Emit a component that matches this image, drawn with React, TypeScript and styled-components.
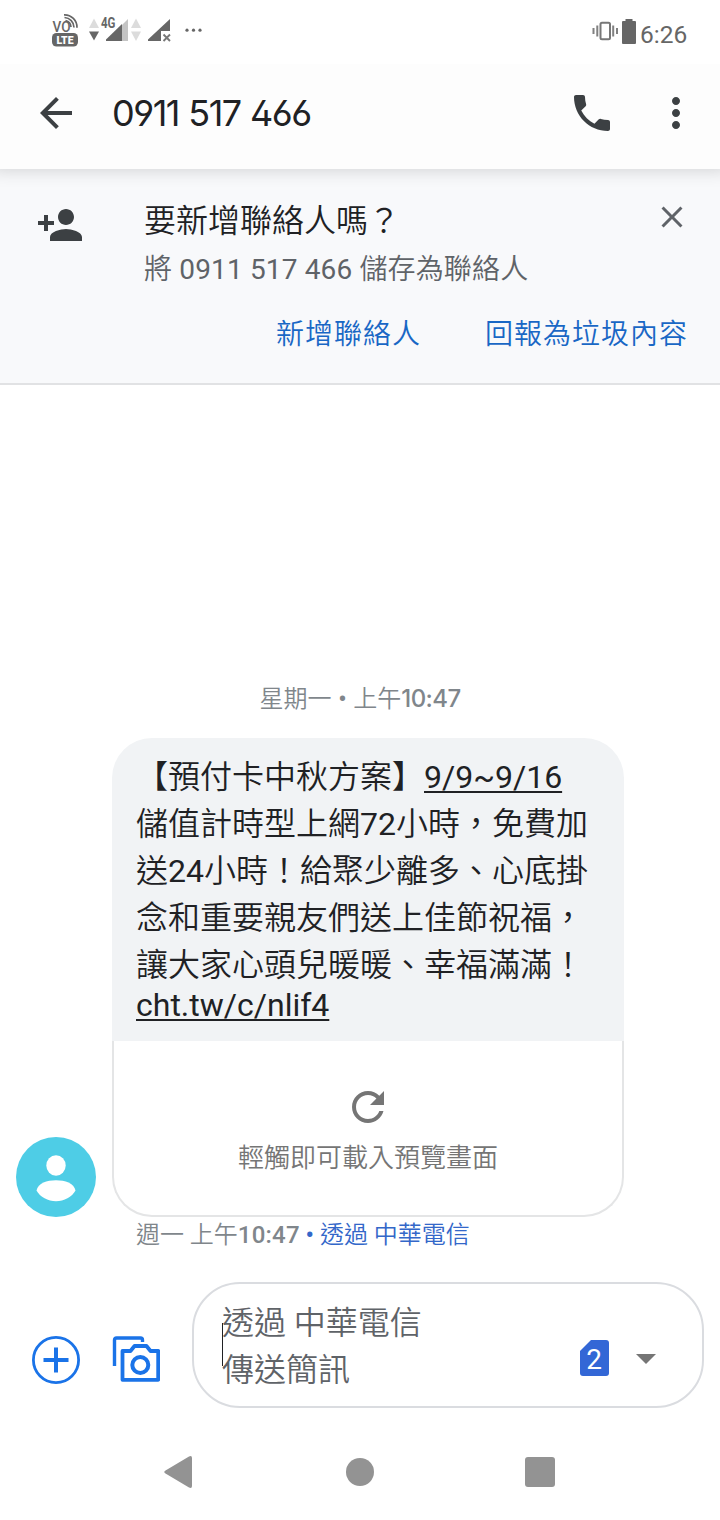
import React from "react";
import styled, { createGlobalStyle } from "styled-components";

const GlobalStyle = createGlobalStyle`
  * { box-sizing: border-box; }
  body {
    margin: 0;
    background: #fff;
    font-family: Roboto, "Noto Sans CJK TC", sans-serif;
    font-weight: 350;
  }
  button {
    padding: 0;
    border: 0;
    background: none;
    font: inherit;
    color: inherit;
  }
  svg { display: block; flex: none; }
`;

const Screen = styled.div`
  width: 720px;
  height: 1520px;
  display: flex;
  flex-direction: column;
  overflow: hidden;
  background: #fff;
`;

const StatusBar = styled.header`
  height: 64px;
  flex: none;
  display: flex;
  justify-content: space-between;
  padding: 0 32px 0 48px;
  color: #666;
`;

const StatusGroup = styled.div`
  display: flex;
`;

const Clock = styled.span`
  padding-top: 19px;
  font-size: 24.5px;
  font-weight: 400;
  line-height: 32px;
  width: 48px;
  white-space: nowrap;
`;

const AppBar = styled.div`
  position: relative;
  z-index: 1;
  height: 105px;
  flex: none;
  display: flex;
  align-items: center;
  padding: 0 20px 7px 32px;
  background: #fdfdfd;
  color: #3c4043;
  box-shadow: 0 -6px 16px 8px rgba(0, 0, 0, 0.15);
  clip-path: inset(0 0 -24px 0);
`;

const IconButton = styled.button<{ $size?: number }>`
  width: ${(p) => p.$size ?? 48}px;
  height: ${(p) => p.$size ?? 48}px;
  flex: none;
`;

const Title = styled.h1`
  margin: 0 auto 0 32px;
  font-family: Inter, Roboto, sans-serif;
  font-feature-settings: "ss01";
  font-size: 36px;
  font-weight: 400;
  line-height: 48px;
  letter-spacing: -1.5px;
  word-spacing: 0.7px;
  color: #202124;
  white-space: nowrap;
`;

const BarActions = styled.div`
  display: flex;
  gap: 36px;
`;

const Banner = styled.section`
  height: 216px;
  flex: none;
  display: grid;
  grid-template-columns: 108px 1fr 36px;
  grid-template-rows: 121px 1fr;
  padding: 30px 30px 0 36px;
  background: #f8f9fb;
  border-bottom: 2px solid #e1e2e4;
  color: #3c4043;
`;

const BannerIcon = styled.div`
  padding-top: 2px;
`;

const BannerClose = styled.div`
  color: #5f6368;
`;

const BannerTitle = styled.div`
  font-size: 32px;
  line-height: 44px;
  color: #202124;
`;

const BannerSub = styled.div`
  margin-top: 7px;
  font-size: 28px;
  line-height: 40px;
  letter-spacing: 0.15px;
  color: #5f6368;
  white-space: nowrap;
`;

const BannerActions = styled.div`
  grid-column: 1 / -1;
  display: flex;
  justify-content: flex-end;
  align-items: flex-start;
  gap: 64px;
  padding-right: 2px;
`;

const TextButton = styled.button`
  font-size: 28px;
  line-height: 30px;
  letter-spacing: 1px;
  color: #1967c5;
`;

const Conversation = styled.main`
  flex: 1;
  display: flex;
  flex-direction: column;
  justify-content: flex-end;
`;

const DateLine = styled.div`
  margin-bottom: 23px;
  text-align: center;
  font-size: 24px;
  line-height: 32px;
  word-spacing: 0.8px;
  color: #80868b;
`;

const Latin = styled.span`
  font-weight: 400;
`;

const Bullet = styled.span`
  font-weight: 500;
`;

const Stamp = styled.span<{ $inter?: boolean }>`
  font-family: ${(p) => (p.$inter ? "Inter, " : "")}Roboto, sans-serif;
  font-weight: 500;
  letter-spacing: ${(p) => (p.$inter ? "-0.6px" : "0.2px")};
`;

const MessageRow = styled.div`
  display: flex;
  align-items: flex-end;
  gap: 16px;
  padding-left: 16px;
`;

const Message = styled.article`
  width: 512px;
`;

const Bubble = styled.div`
  height: 303px;
  padding: 16px 24px 0;
  border-radius: 40px 40px 0 0;
  background: #f1f3f5;
  color: #202124;
  font-size: 32px;
`;

const Line = styled.div<{ $height?: number }>`
  height: ${(p) => p.$height ?? 47}px;
  line-height: ${(p) => p.$height ?? 47}px;
  white-space: nowrap;
`;

const Link = styled.span`
  font-weight: 400;
  text-decoration: underline;
  text-decoration-thickness: 2px;
  text-underline-offset: 3px;
  text-decoration-skip-ink: none;
`;

const Preview = styled.div`
  height: 176px;
  display: flex;
  flex-direction: column;
  align-items: center;
  padding-top: 42px;
  border: 2px solid #e4e5e6;
  border-top: 0;
  border-radius: 0 0 40px 40px;
  color: #757575;
  font-size: 26px;
  line-height: 36px;
`;

const PreviewText = styled.span`
  margin-top: 9px;
`;

const Meta = styled.div`
  height: 65px;
  padding: 1px 0 0 136px;
  font-size: 24px;
  line-height: 34px;
  color: #80868b;
  white-space: nowrap;
`;

const Carrier = styled.span`
  color: #3367c9;
`;

const Composer = styled.footer`
  height: 142px;
  flex: none;
  display: flex;
  align-items: flex-start;
  padding: 0 16px 0 32px;
  color: #1a73e8;
`;

const ComposerTools = styled.div`
  display: flex;
  gap: 32px;
  width: 160px;
  padding-top: 54px;
`;

const InputBox = styled.div`
  position: relative;
  width: 512px;
  height: 126px;
  display: flex;
  align-items: flex-start;
  padding: 16px 46px 0 28px;
  border: 2px solid #dadce0;
  border-radius: 48px;
  color: #5f6368;
  font-size: 32px;
`;

const Placeholder = styled.div`
  flex: 1;
`;

const Cursor = styled.span`
  position: absolute;
  left: 28px;
  top: 39px;
  width: 1px;
  height: 43px;
  background: #202124;
`;

const SimBadge = styled.div`
  width: 29px;
  height: 36px;
  margin: 40px 27px 0 0;
  padding-right: 1px;
  border-radius: 3px;
  background: #3367d6;
  clip-path: polygon(11px 0, 100% 0, 100% 100%, 0 100%, 0 11px);
  color: #fff;
  font-size: 28px;
  font-weight: 400;
  line-height: 39px;
  text-align: center;
`;

const CaretIcon = styled.svg`
  margin-top: 54px;
`;

const NavBar = styled.nav`
  height: 96px;
  flex: none;
  display: flex;
  justify-content: center;
  align-items: center;
  gap: 132px;
  color: #939393;
`;

const Icon = ({ d, size = 48 }: { d: string; size?: number }) => (
  <svg width={size} height={size} viewBox="0 0 24 24" fill="currentColor">
    <path d={d} />
  </svg>
);

const paths = {
  back: "M20 11H7.83l5.59-5.59L12 4l-8 8 8 8 1.41-1.41L7.83 13H20v-2z",
  phone:
    "M6.62 10.79c1.44 2.83 3.76 5.14 6.59 6.59l2.2-2.2c.27-.27.67-.36 1.02-.24 1.12.37 2.33.57 3.57.57.55 0 1 .45 1 1V20c0 .55-.45 1-1 1-9.39 0-17-7.61-17-17 0-.55.45-1 1-1h3.5c.55 0 1 .45 1 1 0 1.25.2 2.45.57 3.57.11.35.03.74-.25 1.02l-2.2 2.2z",
  more: "M12 8c1.1 0 2-.9 2-2s-.9-2-2-2-2 .9-2 2 .9 2 2 2zm0 2c-1.1 0-2 .9-2 2s.9 2 2 2 2-.9 2-2-.9-2-2-2zm0 6c-1.1 0-2 .9-2 2s.9 2 2 2 2-.9 2-2-.9-2-2-2z",
  personAdd:
    "M15 12c2.21 0 4-1.79 4-4s-1.79-4-4-4-4 1.79-4 4 1.79 4 4 4zm-9-2V7H4v3H1v2h3v3h2v-3h3v-2H6zm9 4c-2.67 0-8 1.34-8 4v2h16v-2c0-2.66-5.33-4-8-4z",
  close:
    "M19 6.41L17.59 5 12 10.59 6.41 5 5 6.41 10.59 12 5 17.59 6.41 19 12 13.41 17.59 19 19 17.59 13.41 12z",
  refresh:
    "M17.65 6.35C16.2 4.9 14.21 4 12 4c-4.42 0-7.99 3.58-7.99 8s3.57 8 7.99 8c3.73 0 6.84-2.55 7.73-6h-2.08c-.82 2.33-3.04 4-5.65 4-3.31 0-6-2.69-6-6s2.69-6 6-6c1.66 0 3.14.69 4.22 1.78L13 11h7V4l-2.35 2.35z",
};

const VolteIcon = () => (
  <svg width="36" height="60" viewBox="48 0 36 60" fill="#666">
    <text x="52.5" y="32" fontFamily="Roboto, sans-serif" fontSize="14" fontWeight="500" textLength="18" lengthAdjust="spacingAndGlyphs">VO</text>
    <g fill="none" stroke="#666" strokeWidth="1.7">
      <path d="M65.5 20.5a7 7 0 0 1 5.5 6.5" />
      <path d="M64.5 17.5a10 10 0 0 1 9.5 10" />
      <path d="M64 14.8a12.5 12.5 0 0 1 13 13" />
    </g>
    <rect x="52" y="33" width="26" height="13.5" rx="4.5" />
    <text x="56.5" y="43.8" fill="#fff" fontFamily="Roboto, sans-serif" fontSize="10.5" fontWeight="900" textLength="17" lengthAdjust="spacingAndGlyphs">LTE</text>
  </svg>
);

const SignalIcon = () => (
  <svg width="59" height="60" viewBox="84 0 59 60" fill="#666">
    <path d="M89 28l5-9.5 5 9.5zM131 28l5-9.5 5 9.5zM131 31.5h10l-5 9.5z" fill="#dcdcdc" />
    <path d="M89 31.5h10l-5 9z" />
    <path d="M122 25l6-6v22h-6z" fill="#c4c4c4" />
    <path d="M106 41v-1.500L122 24v17z" />
    <text x="101" y="28" fontFamily="Roboto, sans-serif" fontSize="15.5" fontWeight="700" textLength="14.5" lengthAdjust="spacingAndGlyphs">4G</text>
  </svg>
);

const NoSimIcon = () => (
  <svg width="65" height="60" viewBox="143 0 65 60" fill="#666">
    <path d="M148 41v-1.500L170 19v12h-9v10z" />
    <path d="M163.5 34.5l6.5 6.5m0-6.5l-6.5 6.5" stroke="#777" strokeWidth="1.9" />
    <circle cx="187" cy="30.2" r="1.6" />
    <circle cx="193.5" cy="30.2" r="1.6" />
    <circle cx="200" cy="30.2" r="1.6" />
  </svg>
);

const VibrateBatteryIcon = () => (
  <svg width="52" height="60" viewBox="588 0 52 60" fill="#666">
    <rect x="600.5" y="22.8" width="9.5" height="16.4" rx="1.5" fill="none" stroke="#777" strokeWidth="2" />
    <path d="M593.5 28v6M597.3 25.5v11M613.2 25.5v11M617 28v6" stroke="#808080" strokeWidth="2" />
    <path d="M625.5 21v-2h7v2h2.5q1 0 1 1v21q0 1-1 1h-12q-1 0-1-1V22q0-1 1-1z" />
  </svg>
);

const Avatar = () => (
  <svg width="80" height="80" viewBox="0 0 80 80">
    <circle cx="40" cy="40" r="40" fill="#4ecde6" />
    <ellipse cx="40" cy="28.5" rx="9.7" ry="10.3" fill="#fff" />
    <path d="M20.5 53.5C22 46 31 43.2 40 43.2S58 46 59.5 53.5C56 60 48 64.2 40 64.2S24 60 20.5 53.5z" fill="#fff" />
  </svg>
);

const AddIcon = () => (
  <svg width="48" height="48" viewBox="0 0 48 48" fill="none" stroke="currentColor">
    <circle cx="24" cy="24" r="22.6" strokeWidth="2.8" />
    <path d="M24 11.5v25M11.5 24h25" strokeWidth="4" />
  </svg>
);

const GalleryIcon = () => (
  <svg width="48" height="48" viewBox="0 0 48 48" fill="none" stroke="currentColor">
    <path d="M2.5 30V4q0-2 2-2H28.5q2 0 2 2V6" strokeWidth="3.4" />
    <path d="M10.5 15h8l4-5h12l4 5h7.7V43.8H10.5z" strokeWidth="3.8" strokeLinejoin="round" />
    <circle cx="28.3" cy="29" r="8" strokeWidth="4" />
  </svg>
);

export default function App() {
  return (
    <Screen>
      <GlobalStyle />
      <StatusBar>
        <StatusGroup>
          <VolteIcon />
          <SignalIcon />
          <NoSimIcon />
        </StatusGroup>
        <StatusGroup>
          <VibrateBatteryIcon />
          <Clock>6:26</Clock>
        </StatusGroup>
      </StatusBar>

      <AppBar>
        <IconButton aria-label="返回"><Icon d={paths.back} /></IconButton>
        <Title>0911 517 466</Title>
        <BarActions>
          <IconButton aria-label="通話"><Icon d={paths.phone} /></IconButton>
          <IconButton aria-label="更多"><Icon d={paths.more} /></IconButton>
        </BarActions>
      </AppBar>

      <Banner>
        <BannerIcon><Icon d={paths.personAdd} /></BannerIcon>
        <div>
          <BannerTitle>要新增聯絡人嗎？</BannerTitle>
          <BannerSub>將<Latin> 0911 517 466 </Latin>儲存為聯絡人</BannerSub>
        </div>
        <BannerClose>
          <IconButton $size={36} aria-label="關閉"><Icon d={paths.close} size={36} /></IconButton>
        </BannerClose>
        <BannerActions>
          <TextButton>新增聯絡人</TextButton>
          <TextButton>回報為垃圾內容</TextButton>
        </BannerActions>
      </Banner>

      <Conversation>
        <DateLine>星期一<Bullet> • </Bullet>上午<Stamp $inter>10:47</Stamp></DateLine>
        <MessageRow>
          <Avatar />
          <Message>
            <Bubble>
              <Line>【預付卡中秋方案】<Link>9/9~9/16</Link></Line>
              <Line>儲值計時型上網<Latin>72</Latin>小時，免費加</Line>
              <Line>送<Latin>24</Latin>小時！給聚少離多、心底掛</Line>
              <Line>念和重要親友們送上佳節祝福，</Line>
              <Line>讓大家心頭兒暖暖、幸福滿滿！</Line>
              <Line $height={33}><Link>cht.tw/c/nlif4</Link></Line>
            </Bubble>
            <Preview>
              <Icon d={paths.refresh} />
              <PreviewText>輕觸即可載入預覽畫面</PreviewText>
            </Preview>
          </Message>
        </MessageRow>
        <Meta>
          週一 上午<Stamp>10:47</Stamp> <Carrier><Bullet>• </Bullet>透過 中華電信</Carrier>
        </Meta>
      </Conversation>

      <Composer>
        <ComposerTools>
          <IconButton aria-label="新增"><AddIcon /></IconButton>
          <IconButton aria-label="相機"><GalleryIcon /></IconButton>
        </ComposerTools>
        <InputBox>
          <Cursor />
          <Placeholder>
            <Line>透過 中華電信</Line>
            <Line>傳送簡訊</Line>
          </Placeholder>
          <SimBadge>2</SimBadge>
          <CaretIcon width="20" height="10" viewBox="0 0 20 10" fill="#757575">
            <path d="M0 0h20L10 10z" />
          </CaretIcon>
        </InputBox>
      </Composer>

      <NavBar>
        <svg width="48" height="48" viewBox="0 0 48 48" fill="currentColor">
          <path d="M9.5 22.5Q7 24 9.5 25.5L33 39.600Q36 41 36 38V10Q36 7 33 8.400z" />
        </svg>
        <svg width="48" height="48" viewBox="0 0 48 48" fill="currentColor">
          <circle cx="24" cy="24" r="14" />
        </svg>
        <svg width="48" height="48" viewBox="0 0 48 48" fill="currentColor">
          <rect x="9" y="9" width="30" height="30" rx="3" />
        </svg>
      </NavBar>
    </Screen>
  );
}
